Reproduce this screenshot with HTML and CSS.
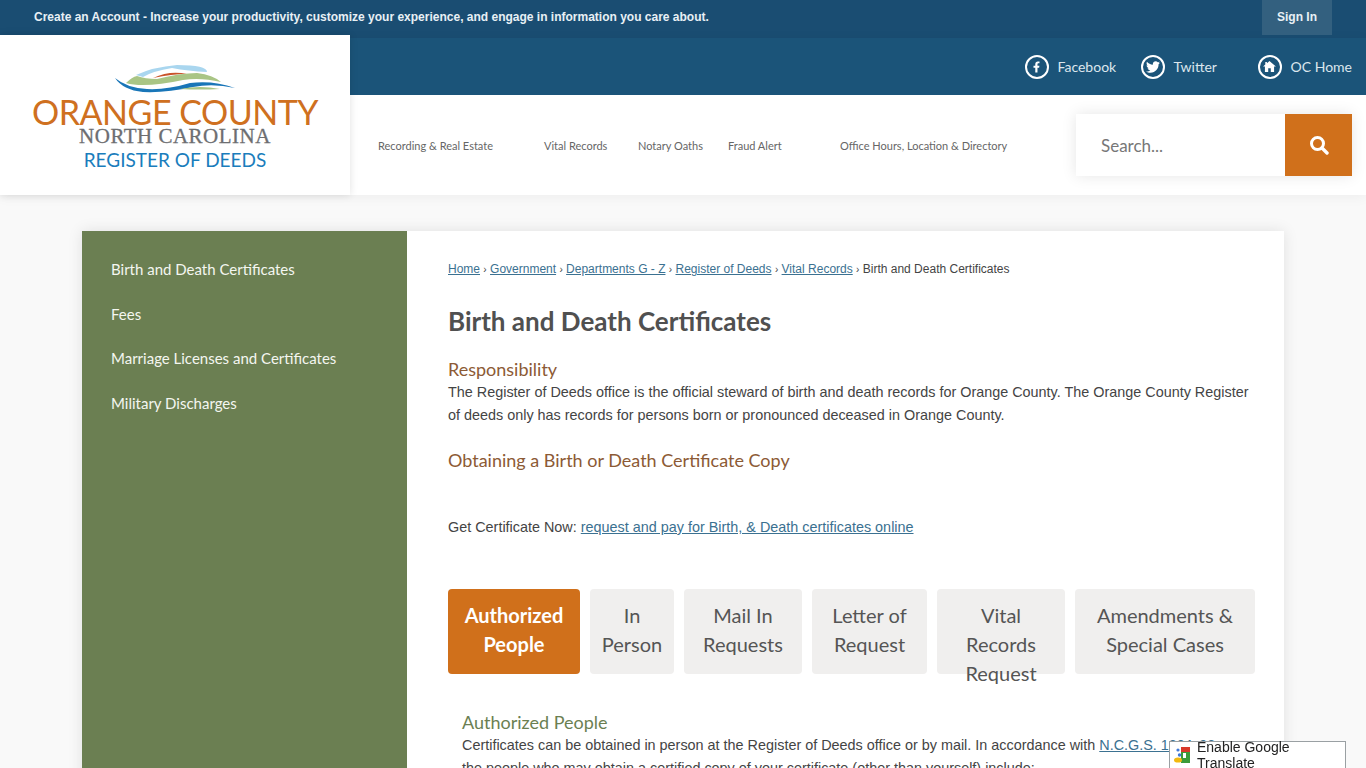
FILE: index.html
```html
<!DOCTYPE html>
<html lang="en">

<head>
    <meta charset="UTF-8">
    <meta name="viewport" content="width=device-width, initial-scale=1.0">
    <title>Birth and Death Certificates</title>
    <link rel="stylesheet" href="styles.css">
</head>

<body>
    <div class="topbar">
        <p class="topbar-text">Create an Account - Increase your productivity, customize your experience, and engage in information you care about.</p>
        <a class="signin" href="#">Sign In</a>
    </div>

    <header class="header">
        <a class="logo" href="#">
            <svg class="logo-mark" viewBox="0 0 150 40">
                <path fill="#a9d6ef" d="M36 15Q53 7 77 5Q107 5 107 12Q88 11 72 8Q53 11 43 17Z" />
                <path fill="#c9532a" d="M53 18Q70 10 87 14Q72 14 53 18Z" />
                <path fill="#a9c585" d="M26 23Q32 17 37 16Q45 19 57 19Q80 13 97 13Q113 15 121 22Q100 17 83 20Q60 25 43 25Q33 25 26 23Z" />
                <path fill="#1976b8" d="M15 18Q27 28 47 29Q67 30 90 23Q113 20 135 28Q113 23 93 27Q67 33 43 32Q23 30 15 18Z" />
                <path fill="#a9c585" d="M80 29Q100 25 120 29Q100 30 80 29Z" />
            </svg>
            <span class="logo-county">ORANGE COUNTY</span>
            <span class="logo-state">NORTH CAROLINA</span>
            <span class="logo-dept">REGISTER OF DEEDS</span>
        </a>

        <div class="header-right">
            <div class="social">
                <a class="social-link" href="#">
                    <span class="social-icon">
                        <svg viewBox="0 0 320 512" width="7" height="12">
                            <path fill="#fff" d="M279.14 288l14.22-92.66h-88.91v-60.13c0-25.35 12.42-50.06 52.24-50.06h40.42V6.26S260.43 0 225.36 0c-73.22 0-121.08 44.38-121.08 124.72v70.62H22.89V288h81.39v224h100.17V288z" />
                        </svg>
                    </span>
                    Facebook
                </a>
                <a class="social-link" href="#">
                    <span class="social-icon">
                        <svg viewBox="0 0 512 512" width="14" height="14">
                            <path fill="#fff" d="M459.37 151.716c.325 4.548.325 9.097.325 13.645 0 138.72-105.583 298.558-298.558 298.558-59.452 0-114.68-17.219-161.137-47.106 8.447.974 16.568 1.299 25.34 1.299 49.055 0 94.213-16.568 130.274-44.832-46.132-.975-84.792-31.188-98.112-72.772 6.498.974 12.995 1.624 19.818 1.624 9.421 0 18.843-1.3 27.614-3.573-48.081-9.747-84.143-51.98-84.143-102.985v-1.299c13.969 7.797 30.214 12.67 47.431 13.319-28.264-18.843-46.781-51.005-46.781-87.391 0-19.492 5.197-37.36 14.294-52.954 51.655 63.675 129.3 105.258 216.365 109.807-1.624-7.797-2.599-15.918-2.599-24.04 0-57.828 46.782-104.934 104.934-104.934 30.213 0 57.502 12.67 76.67 33.137 23.715-4.548 46.456-13.32 66.599-25.34-7.798 24.366-24.366 44.833-46.132 57.827 21.117-2.273 41.584-8.122 60.426-16.243-14.292 20.791-32.161 39.308-52.628 54.253z" />
                        </svg>
                    </span>
                    Twitter
                </a>
                <a class="social-link" href="#">
                    <span class="social-icon">
                        <svg viewBox="0 0 14 12" width="13" height="11">
                            <path fill="#fff" d="M7 0L14 6H12V12H8.4V8H5.6V12H2V6H0L2.4 3.9V1H4.2V2.4Z" />
                        </svg>
                    </span>
                    OC Home
                </a>
            </div>

            <div class="nav-row">
                <nav class="nav">
                    <a href="#">Recording &amp; Real Estate</a>
                    <a href="#">Vital Records</a>
                    <a href="#">Notary Oaths</a>
                    <a href="#">Fraud Alert</a>
                    <a href="#">Office Hours, Location &amp; Directory</a>
                </nav>
                <form class="search">
                    <input class="search-input" type="text" placeholder="Search...">
                    <button class="search-btn" type="button" aria-label="Search">
                        <svg viewBox="0 0 20 20" width="20" height="20">
                            <circle cx="8.5" cy="8.5" r="6" fill="none" stroke="#fff" stroke-width="3" />
                            <path d="M13 13L18 18" stroke="#fff" stroke-width="3.4" stroke-linecap="round" />
                        </svg>
                    </button>
                </form>
            </div>
        </div>
    </header>

    <div class="page">
        <aside class="sidebar">
            <a href="#">Birth and Death Certificates</a>
            <a href="#">Fees</a>
            <a href="#">Marriage Licenses and Certificates</a>
            <a href="#">Military Discharges</a>
        </aside>

        <main class="content">
            <div class="breadcrumbs">
                <a href="#">Home</a> <span class="sep">›</span>
                <a href="#">Government</a> <span class="sep">›</span>
                <a href="#">Departments G - Z</a> <span class="sep">›</span>
                <a href="#">Register of Deeds</a> <span class="sep">›</span>
                <a href="#">Vital Records</a> <span class="sep">›</span>
                Birth and Death Certificates
            </div>

            <h1 class="title">Birth and Death Certificates</h1>

            <h2 class="subhead">Responsibility</h2>
            <p class="text">The Register of Deeds office is the official steward of birth and death records for Orange County. The Orange County Register of deeds only has records for persons born or pronounced deceased in Orange County.</p>

            <h2 class="subhead subhead-second">Obtaining a Birth or Death Certificate Copy</h2>
            <p class="text text-now">Get Certificate Now: <a href="#">request and pay for Birth, &amp; Death certificates online</a></p>

            <div class="tabs">
                <a class="tab tab-active tab-1" href="#">Authorized People</a>
                <a class="tab tab-2" href="#">In Person</a>
                <a class="tab tab-3" href="#">Mail In Requests</a>
                <a class="tab tab-4" href="#">Letter of Request</a>
                <a class="tab tab-5" href="#">Vital Records Request</a>
                <a class="tab tab-6" href="#">Amendments &amp; Special Cases</a>
            </div>

            <section class="panel">
                <h3 class="panel-head">Authorized People</h3>
                <p class="text">Certificates can be obtained in person at the Register of Deeds office or by mail. In accordance with <a href="#">N.C.G.S. 130A-93</a>, the people who may obtain a certified copy of your certificate (other than yourself) include:</p>
            </section>
        </main>
    </div>

    <div class="translate">
        <svg class="translate-icon" viewBox="0 0 16 16" width="16" height="16">
            <rect x="7" y="0" width="9" height="7" fill="#d8392b" />
            <rect x="7" y="5" width="9" height="11" fill="#3c9b3a" />
            <rect x="9" y="6" width="3" height="5" fill="#fff" />
            <circle cx="4" cy="3" r="1.6" fill="#3f78d8" />
            <circle cx="5.5" cy="8" r="1.7" fill="#3f78d8" />
            <ellipse cx="4" cy="13" rx="4" ry="2.6" fill="#f2b90f" />
        </svg>
        Enable Google Translate
    </div>
</body>

</html>
```

FILE: styles.css
```css
html,
body {
    height: 768px;
    overflow: hidden;
}

body {
    margin: 0;
    padding: 0;
    font-family: "Liberation Sans", Arial, sans-serif;
    background-color: #f9f9f9;
    color: #444;
}

a {
    text-decoration: none;
}

/* top strip */
.topbar {
    display: flex;
    justify-content: space-between;
    height: 38px;
    padding: 0 34px;
    background-color: #1a4d72;
    box-sizing: border-box;
}

.topbar-text {
    margin: 0;
    line-height: 35px;
    font-size: 12px;
    font-weight: bold;
    color: #e8f0f5;
}

.signin {
    width: 70px;
    height: 35px;
    line-height: 35px;
    text-align: center;
    font-size: 12px;
    font-weight: bold;
    color: #e8f0f5;
    background-color: #33607f;
}

/* header */
.header {
    display: flex;
    height: 157px;
    box-shadow: 0 2px 12px rgba(0, 0, 0, 0.05);
}

.logo {
    position: relative;
    z-index: 2;
    display: flex;
    flex-direction: column;
    align-items: center;
    width: 350px;
    height: 160px;
    margin-top: -3px;
    padding-top: 25px;
    box-sizing: border-box;
    background-color: #fff;
    box-shadow: 0 0 8px rgba(0, 0, 0, 0.12);
}

.logo-mark {
    width: 150px;
    height: 40px;
    margin-left: -1px;
    margin-bottom: -3px;
}

.logo-county {
    font-family: Lato, sans-serif;
    font-size: 34px;
    line-height: 30px;
    letter-spacing: -0.5px;
    color: #cf7020;
}

.logo-state {
    font-family: "Liberation Serif", serif;
    font-size: 21px;
    line-height: 19px;
    letter-spacing: 0.5px;
    color: #6d6e71;
    -webkit-text-stroke: 0.3px #6d6e71;
}

.logo-dept {
    font-family: Lato, sans-serif;
    font-size: 19px;
    line-height: 28px;
    color: #1a7dbc;
}

.header-right {
    flex: 1;
    display: flex;
    flex-direction: column;
}

.social {
    display: grid;
    grid-template-columns: 116px 117px auto;
    justify-content: end;
    align-items: center;
    height: 57px;
    padding-right: 14px;
    background-color: #1b5479;
}

.social-link {
    display: flex;
    align-items: center;
    gap: 9px;
    font-family: Lato, sans-serif;
    font-size: 14px;
    color: #dbe6ed;
}

.social-icon {
    display: flex;
    align-items: center;
    justify-content: center;
    width: 24px;
    height: 24px;
    border: 2px solid #fff;
    border-radius: 50%;
    box-sizing: border-box;
}

.nav-row {
    flex: 1;
    display: flex;
    justify-content: space-between;
    align-items: center;
    padding: 0 14px 0 28px;
    background-color: #fff;
}

.nav {
    display: grid;
    grid-template-columns: 166px 94px 90px 112px auto;
    font-family: Lato, sans-serif;
    font-size: 11px;
}

.nav a {
    color: #666;
}

.search {
    display: flex;
    width: 276px;
    height: 62px;
    box-shadow: 0 0 14px rgba(0, 0, 0, 0.1);
}

.search-input {
    width: 209px;
    padding: 0 0 0 25px;
    border: none;
    box-sizing: border-box;
    font-family: Lato, sans-serif;
    font-size: 17px;
    background-color: #fff;
}

.search-input::placeholder {
    color: #777;
    opacity: 1;
}

.search-btn {
    flex: 1;
    display: flex;
    align-items: center;
    justify-content: center;
    padding: 0;
    border: none;
    background-color: #d0701b;
}

/* page body */
.page {
    display: flex;
    width: 1202px;
    margin: 36px 0 0 82px;
    background-color: #fff;
    box-shadow: 0 0 14px rgba(0, 0, 0, 0.1);
}

.sidebar {
    display: flex;
    flex-direction: column;
    flex: none;
    gap: 24.6px;
    width: 325px;
    min-height: 600px;
    padding: 28px 0 0 29px;
    box-sizing: border-box;
    background-color: #6b7f52;
}

.sidebar a {
    font-family: Lato, sans-serif;
    font-size: 15px;
    line-height: 20px;
    color: #f4f6f0;
}

.content {
    flex: 1;
    padding: 31px 29px 0 41px;
}

.breadcrumbs {
    font-size: 12px;
    line-height: 14px;
    color: #444;
}

.breadcrumbs a {
    color: #3b7191;
    text-decoration: underline;
}

.sep {
    font-size: 10px;
}

.title {
    margin: 28px 0 0;
    font-family: Lato, sans-serif;
    font-size: 26px;
    line-height: 32px;
    font-weight: 700;
    color: #505050;
}

.subhead {
    margin: 20px 0 0;
    font-family: Lato, sans-serif;
    font-size: 18px;
    line-height: 24px;
    font-weight: 400;
    color: #8c5a35;
}

.subhead-second {
    margin-top: 21px;
}

.text {
    margin: 0;
    font-size: 14.4px;
    line-height: 23px;
    color: #444;
}

.text a {
    color: #3b7191;
    text-decoration: underline;
}

.text-now {
    margin-top: 44px;
}

/* tabs */
.tabs {
    display: flex;
    gap: 10px;
    margin-top: 50px;
}

.tab {
    height: 85px;
    padding-top: 12px;
    box-sizing: border-box;
    border-radius: 4px;
    font-family: Lato, sans-serif;
    font-size: 20px;
    line-height: 29px;
    text-align: center;
    color: #555;
    background-color: #f0efee;
}

.tab-1 {
    width: 132px;
    padding-left: 12px;
    padding-right: 12px;
}

.tab-2 {
    width: 84px;
    padding-left: 10px;
    padding-right: 10px;
}

.tab-3 {
    width: 118px;
    padding-left: 18px;
    padding-right: 18px;
}

.tab-4 {
    width: 115px;
    padding-left: 18px;
    padding-right: 18px;
}

.tab-5 {
    width: 128px;
    padding-left: 24px;
    padding-right: 24px;
}

.tab-6 {
    width: 180px;
    padding-left: 14px;
    padding-right: 14px;
}

.tab-active {
    font-weight: 700;
    color: #fff;
    background-color: #d0701b;
}

.panel {
    padding: 36px 14px 0;
}

.panel-head {
    margin: 0;
    font-family: Lato, sans-serif;
    font-size: 18px;
    line-height: 24px;
    font-weight: 400;
    color: #6b7f52;
}

/* google widget */
.translate {
    position: fixed;
    right: 20px;
    bottom: 0;
    display: flex;
    align-items: center;
    gap: 7px;
    width: 177px;
    height: 27px;
    padding-left: 4px;
    box-sizing: border-box;
    border: 1px solid #9aa0a3;
    border-bottom: none;
    background-color: #fff;
    font-size: 14px;
    color: #222;
}

.translate-icon {
    flex: none;
}
```
